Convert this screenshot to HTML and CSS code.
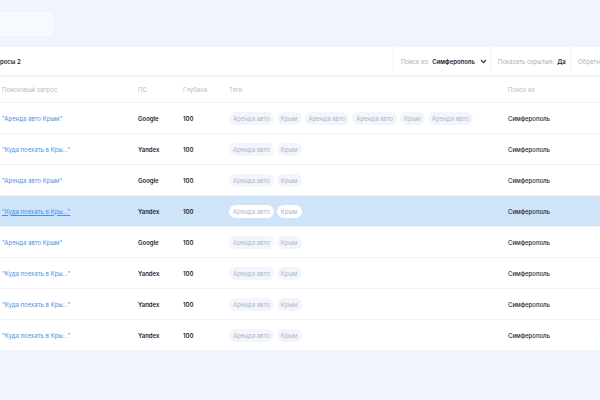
FILE: index.html
```html
<!DOCTYPE html>
<html lang="ru">
<head>
    <meta charset="UTF-8">
    <meta name="viewport" content="width=device-width, initial-scale=1.0">
    <title>Запросы</title>
    <link rel="stylesheet" href="styles.css">
</head>
<body>
    <div class="page">
        <div class="top-card"></div>

        <div class="panel">
            <div class="toolbar">
                <div class="toolbar-title">Запросы 2</div>
                <div class="filter">
                    <span class="filter-label">Поиск из:</span>
                    <span class="filter-value">Симферополь</span>
                    <svg class="chevron" width="7" height="5" viewBox="0 0 7 5"><path d="M1 1 L3.5 3.6 L6 1" fill="none" stroke="#2a3140" stroke-width="1.1"/></svg>
                </div>
                <div class="filter">
                    <span class="filter-label">Показать скрытые:</span>
                    <span class="filter-value">Да</span>
                </div>
                <div class="filter">
                    <span class="filter-label">Обратная сортировка:</span>
                    <span class="filter-value">Нет</span>
                </div>
            </div>

            <div class="row head">
                <div>Поисковый запрос</div>
                <div>ПС</div>
                <div>Глубина</div>
                <div>Теги</div>
                <div>Поиск из</div>
            </div>

            <div class="row">
                <div class="query">"Аренда авто Крым"</div>
                <div class="bold">Google</div>
                <div class="bold">100</div>
                <div class="tags">
                    <span class="tag">Аренда авто</span>
                    <span class="tag">Крым</span>
                    <span class="tag">Аренда авто</span>
                    <span class="tag">Аренда авто</span>
                    <span class="tag">Крым</span>
                    <span class="tag">Аренда авто</span>
                </div>
                <div class="city">Симферополь</div>
            </div>
            <div class="row">
                <div class="query">"Куда поехать в Кры..."</div>
                <div class="bold">Yandex</div>
                <div class="bold">100</div>
                <div class="tags"><span class="tag">Аренда авто</span><span class="tag">Крым</span></div>
                <div class="city">Симферополь</div>
            </div>
            <div class="row">
                <div class="query">"Аренда авто Крым"</div>
                <div class="bold">Google</div>
                <div class="bold">100</div>
                <div class="tags"><span class="tag">Аренда авто</span><span class="tag">Крым</span></div>
                <div class="city">Симферополь</div>
            </div>
            <div class="row selected">
                <div class="query">"Куда поехать в Кры..."</div>
                <div class="bold">Yandex</div>
                <div class="bold">100</div>
                <div class="tags"><span class="tag">Аренда авто</span><span class="tag">Крым</span></div>
                <div class="city">Симферополь</div>
            </div>
            <div class="row">
                <div class="query">"Аренда авто Крым"</div>
                <div class="bold">Google</div>
                <div class="bold">100</div>
                <div class="tags"><span class="tag">Аренда авто</span><span class="tag">Крым</span></div>
                <div class="city">Симферополь</div>
            </div>
            <div class="row">
                <div class="query">"Куда поехать в Кры..."</div>
                <div class="bold">Yandex</div>
                <div class="bold">100</div>
                <div class="tags"><span class="tag">Аренда авто</span><span class="tag">Крым</span></div>
                <div class="city">Симферополь</div>
            </div>
            <div class="row">
                <div class="query">"Куда поехать в Кры..."</div>
                <div class="bold">Yandex</div>
                <div class="bold">100</div>
                <div class="tags"><span class="tag">Аренда авто</span><span class="tag">Крым</span></div>
                <div class="city">Симферополь</div>
            </div>
            <div class="row last">
                <div class="query">"Куда поехать в Кры..."</div>
                <div class="bold">Yandex</div>
                <div class="bold">100</div>
                <div class="tags"><span class="tag">Аренда авто</span><span class="tag">Крым</span></div>
                <div class="city">Симферополь</div>
            </div>
        </div>
    </div>
</body>
</html>
```
FILE: styles.css
```css
body {
    margin: 0;
    background-color: #f0f5fd;
    font-family: Inter, "Noto Sans", sans-serif;
    font-size: 6px;
    color: #1f2633;
    overflow: hidden;
}
.page {
    width: 720px;
    margin-left: -30px;
    padding-top: 12px;
}
.top-card {
    width: 81px;
    height: 22px;
    background-color: #f6f9fe;
    border: 1px solid #fbfcff;
    border-radius: 3px;
    margin-bottom: 11px;
}
.panel {
    background-color: #ffffff;
}
.toolbar {
    display: flex;
    height: 28px;
    border-bottom: 2px solid #eef2f8;
}
.toolbar-title {
    flex-shrink: 0;
    width: 404px;
    padding-left: 19px;
    display: flex;
    align-items: center;
    font-weight: 600;
}
.filter {
    flex-shrink: 0;
    display: flex;
    align-items: center;
    gap: 3px;
    padding: 0 7px;
    border-left: 1px solid #f1f4f9;
    white-space: nowrap;
}
.filter:nth-child(2) {
    width: 82px;
}
.filter:nth-child(3) {
    width: 65px;
}
.filter-label {
    color: #a6afc0;
}
.filter-value {
    font-weight: 600;
}
.chevron {
    flex-shrink: 0;
    margin-left: 2px;
}
.row {
    display: grid;
    grid-template-columns: 136px 45px 46px 279px 1fr;
    align-items: center;
    height: 30px;
    padding-left: 32px;
    border-bottom: 1px solid #f1f3f7;
}
.row.head {
    height: 25px;
    color: #b5bcc8;
}
.row.last {
    border-bottom: none;
}
.row.selected {
    background-color: #cfe3f9;
}
.query {
    color: #4a90e2;
}
.selected .query {
    text-decoration: underline;
}
.bold {
    font-weight: 600;
}
.city {
    font-weight: 500;
}
.tags {
    display: flex;
    gap: 3px;
}
.tag {
    padding: 3px 4px;
    border-radius: 7px;
    background-color: #f2f6fc;
    color: #acb5c5;
    white-space: nowrap;
}
.selected .tag {
    background-color: #ffffff;
}
```
